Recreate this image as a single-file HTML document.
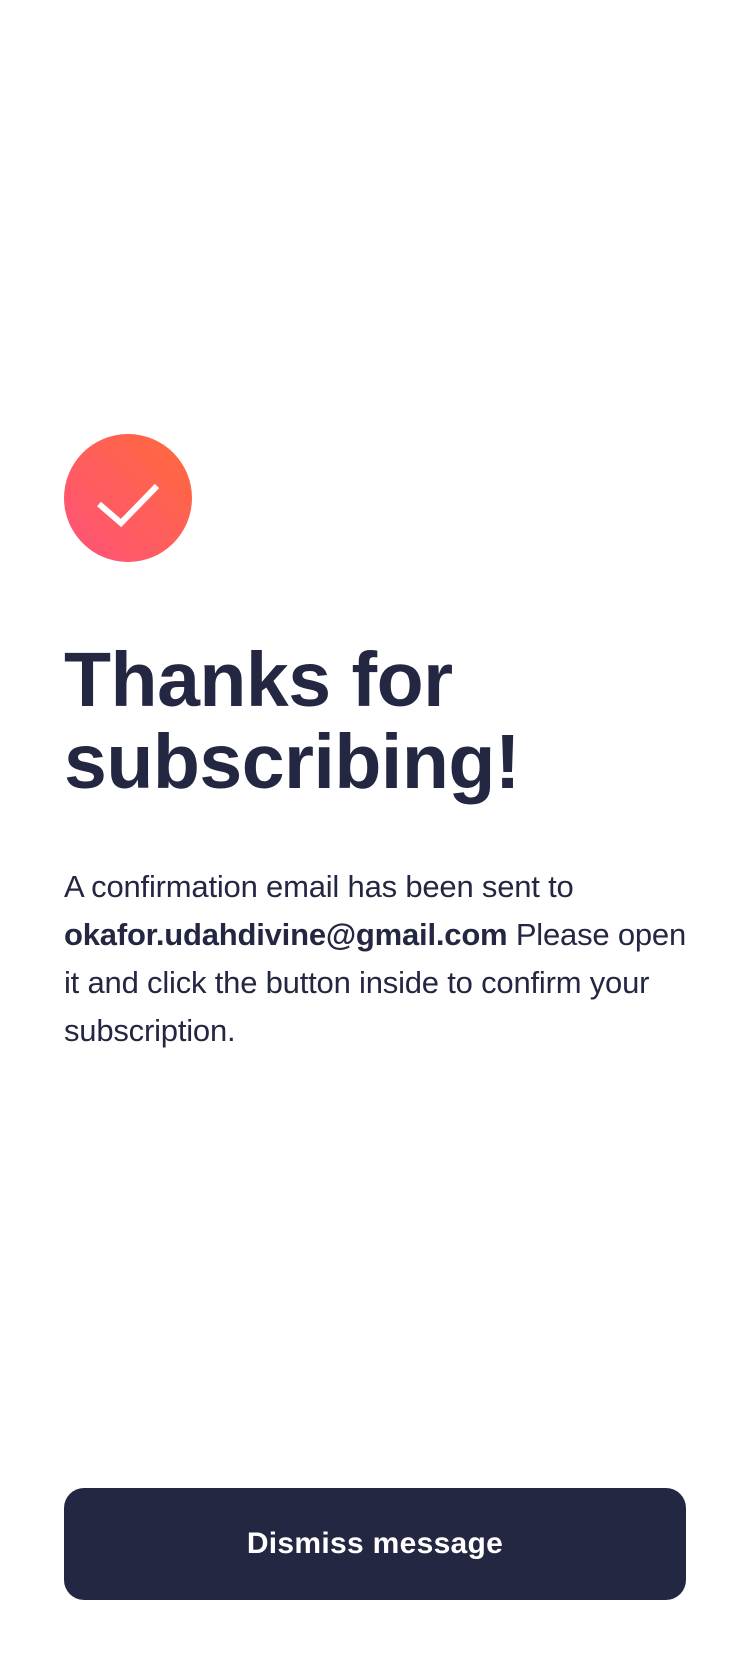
<!DOCTYPE html>
<html><head><meta charset="utf-8"><style>
html,body{margin:0;padding:0;background:#fff;width:750px;height:1680px;overflow:hidden}
body{font-family:"Liberation Sans",Arial,sans-serif;color:#242742;position:relative}
.icon{position:absolute;left:64px;top:434px;width:128px;height:128px;border-radius:50%;background:linear-gradient(225deg,#ff6a3a,#ff527b)}
h1{position:absolute;left:64px;top:639px;margin:0;font-size:77px;line-height:82px;font-weight:700;letter-spacing:-0.5px;white-space:nowrap}
p{position:absolute;left:64px;top:863px;margin:0;font-size:31px;line-height:48px;white-space:nowrap;letter-spacing:-0.2px}
.btn{position:absolute;left:64px;top:1488px;width:622px;height:112px;border-radius:20px;background:#242742;color:#fff;font-weight:700;font-size:30px;letter-spacing:0.3px;display:flex;align-items:center;justify-content:center}
</style></head><body>
<div class="icon"><svg width="128" height="128" viewBox="0 0 128 128"><path d="M35 70 L57 89 L93 52" fill="none" stroke="#fff" stroke-width="6"/></svg></div>
<h1>Thanks for<br>subscribing!</h1>
<p>A confirmation email has been sent to<br><b>okafor.udahdivine@gmail.com</b> Please open<br>it and click the button inside to confirm your<br>subscription.</p>
<div class="btn">Dismiss message</div>
</body></html>
